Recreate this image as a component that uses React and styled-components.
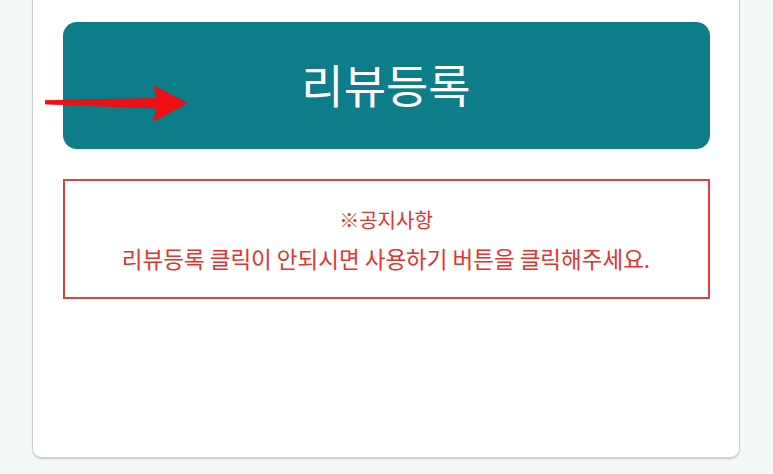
import React from "react";
import styled, { createGlobalStyle } from "styled-components";

const Global = createGlobalStyle`
  html, body { margin: 0; padding: 0; background: #f3f8f9; }
  body { font-family: "Noto Sans CJK KR", "Noto Sans", sans-serif; overflow: hidden; }
`;

const Page = styled.div`
  width: 773px;
  height: 474px;
  padding: 0 33px 0 32px;
  box-sizing: border-box;
  background: #f3f8f9;
  display: flex;
  flex-direction: column;
  overflow: hidden;
`;

const Card = styled.div`
  margin-top: -20px;
  flex: none;
  background: #ffffff;
  border: 1.5px solid #cdcfd1;
  border-bottom-width: 2px;
  border-radius: 10px;
  box-shadow: 0 1px 2px rgba(0, 0, 0, 0.08);
  padding: 40.5px 29.5px 158px;
  display: flex;
  flex-direction: column;
  gap: 30px;
  position: relative;
`;

const ReviewButton = styled.button`
  height: 127px;
  border: none;
  border-radius: 14px;
  background: #0d7d8a;
  color: #ffffff;
  font-family: "Noto Sans CJK KR", sans-serif;
  font-size: 46px;
  font-weight: 400;
  display: flex;
  align-items: center;
  justify-content: center;
  padding: 0 0 4px;
  cursor: pointer;
`;

const Notice = styled.div`
  border: 2px solid #e0403c;
  padding: 19px 0 21px;
  display: flex;
  flex-direction: column;
  align-items: center;
  color: #e2332e;
`;

const NoticeLine = styled.div`
  white-space: nowrap;
  font-size: ${(p) => p.$size}px;
  line-height: ${(p) => p.$lh}px;
`;

const Arrow = styled.svg`
  position: absolute;
  left: 12px;
  top: 103.5px;
  width: 145px;
  height: 38px;
`;

export default function App() {
  return (
    <Page>
      <Global />
      <Card>
        <ReviewButton>리뷰등록</ReviewButton>
        <Notice>
          <NoticeLine $size={20} $lh={40}>※공지사항</NoticeLine>
          <NoticeLine $size={22.5} $lh={36}>리뷰등록 클릭이 안되시면 사용하기 버튼을 클릭해주세요.</NoticeLine>
        </Notice>
        <Arrow viewBox="0 0 145 38">
          <path
            d="M0.5 15.5 L112 13.5 L109 1 L142 18 L109 36 L112 23 L0.5 19 Z"
            fill="#f00f12"
            stroke="#e80c0f"
            strokeWidth="0.8"
            strokeLinejoin="round"
          />
        </Arrow>
      </Card>
    </Page>
  );
}
